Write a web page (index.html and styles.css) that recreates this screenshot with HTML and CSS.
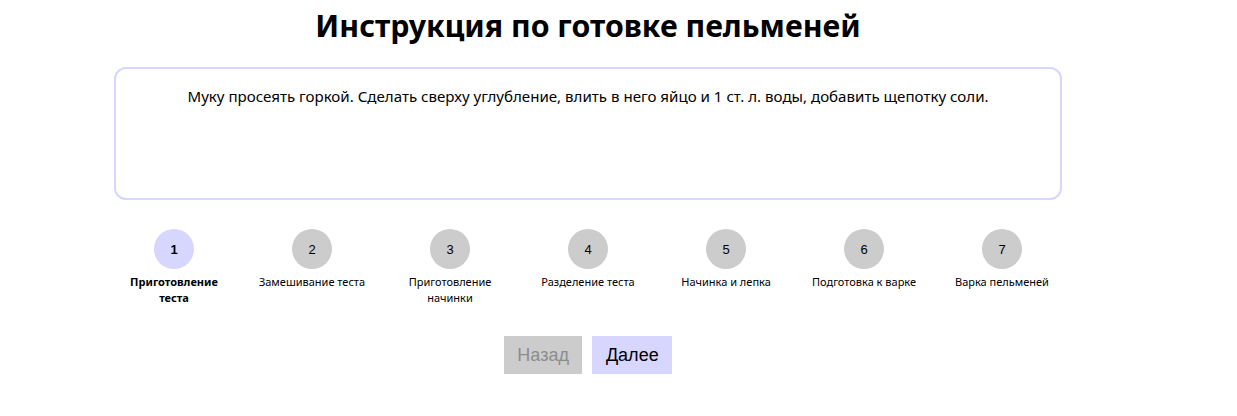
FILE: index.html
```html
<!DOCTYPE html>
<html lang="ru">
<head>
<meta charset="utf-8">
<title>Инструкция по готовке пельменей</title>
<link rel="stylesheet" href="styles.css">
</head>
<body>
<div class="page">
  <h1 class="title">Инструкция по готовке пельменей</h1>
  <div class="card">
    <p class="card-text">Муку просеять горкой. Сделать сверху углубление, влить в него яйцо и 1 ст. л. воды, добавить щепотку соли.</p>
  </div>
  <div class="steps">
    <div class="step active"><div class="circle">1</div><div class="label">Приготовление теста</div></div>
    <div class="step"><div class="circle">2</div><div class="label">Замешивание теста</div></div>
    <div class="step"><div class="circle">3</div><div class="label">Приготовление начинки</div></div>
    <div class="step"><div class="circle">4</div><div class="label">Разделение теста</div></div>
    <div class="step"><div class="circle">5</div><div class="label">Начинка и лепка</div></div>
    <div class="step"><div class="circle">6</div><div class="label">Подготовка к варке</div></div>
    <div class="step"><div class="circle">7</div><div class="label">Варка пельменей</div></div>
  </div>
  <div class="nav">
    <button class="btn btn-back" disabled>Назад</button>
    <button class="btn btn-next">Далее</button>
  </div>
</div>
</body>
</html>
```
FILE: styles.css
```css
html, body {
  margin: 0;
  padding: 0;
  background: #fff;
}
body {
  font-family: "Noto Sans", "Open Sans", sans-serif;
  color: #000;
}
.page {
  width: 948px;
  margin-left: 114px;
  display: flex;
  flex-direction: column;
  align-items: center;
}
.title {
  margin: 4px 0 0;
  font-size: 30.3px;
  font-weight: 700;
  line-height: 44px;
  text-align: center;
}
.card {
  box-sizing: border-box;
  width: 948px;
  height: 133px;
  margin-top: 19px;
  border: 2px solid #d6d6ff;
  border-radius: 12px;
  padding: 16px 20px;
}
.card-text {
  margin: 0;
  font-size: 15.1px;
  line-height: 22px;
  text-align: center;
}
.steps {
  display: flex;
  gap: 18px;
  margin-top: 29px;
}
.step {
  width: 120px;
  display: flex;
  flex-direction: column;
  align-items: center;
}
.circle {
  width: 40px;
  height: 40px;
  border-radius: 50%;
  background: #cccccc;
  display: flex;
  align-items: center;
  justify-content: center;
  font-family: "Liberation Sans", Arial, sans-serif;
  font-size: 13px;
}
.step.active .circle {
  background: #d6d6ff;
  font-weight: 700;
}
.label {
  margin-top: 5px;
  font-size: 11px;
  line-height: 16px;
  text-align: center;
}
.step.active .label {
  font-weight: 700;
}
.nav {
  display: flex;
  gap: 10px;
  margin-top: 30px;
}
.btn {
  height: 38px;
  border: none;
  padding: 0 13.5px;
  font-family: "Liberation Sans", Arial, sans-serif;
  font-size: 18px;
  color: #000;
  background: #d6d6ff;
}
.btn-back {
  background: #cccccc;
  color: #8c8c8c;
}
```
